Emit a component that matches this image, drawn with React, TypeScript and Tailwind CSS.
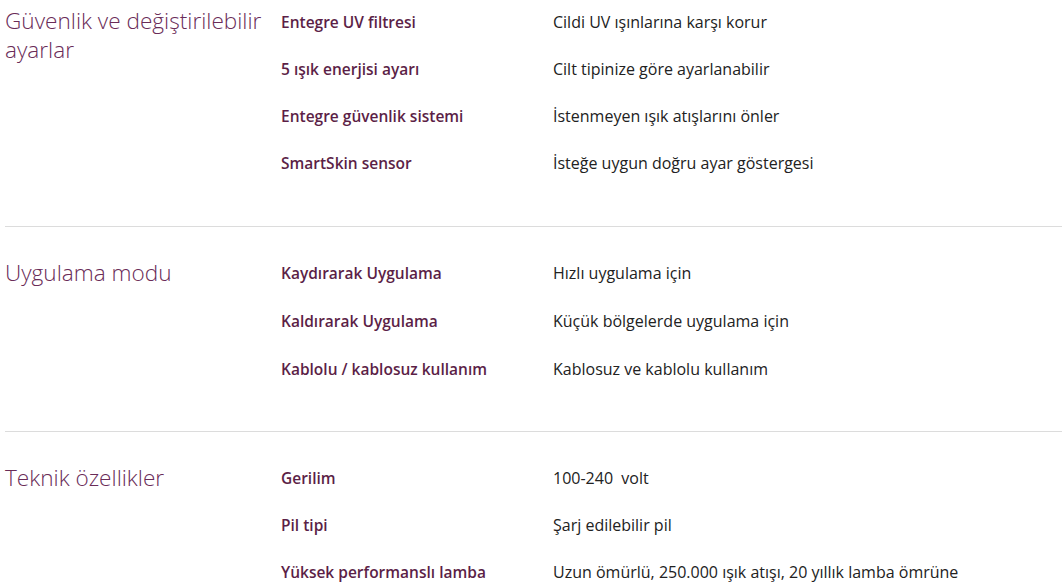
const SECTIONS: { title: string; rows: [string, string][] }[] = [
  {
    title: 'Güvenlik ve değiştirilebilir ayarlar',
    rows: [
      ['Entegre UV filtresi', 'Cildi UV ışınlarına karşı korur'],
      ['5 ışık enerjisi ayarı', 'Cilt tipinize göre ayarlanabilir'],
      ['Entegre güvenlik sistemi', 'İstenmeyen ışık atışlarını önler'],
      ['SmartSkin sensor', 'İsteğe uygun doğru ayar göstergesi'],
    ],
  },
  {
    title: 'Uygulama modu',
    rows: [
      ['Kaydırarak Uygulama', 'Hızlı uygulama için'],
      ['Kaldırarak Uygulama', 'Küçük bölgelerde uygulama için'],
      ['Kablolu / kablosuz kullanım', 'Kablosuz ve kablolu kullanım'],
    ],
  },
  {
    title: 'Teknik özellikler',
    rows: [
      ['Gerilim', '100-240\u00a0 volt'],
      ['Pil tipi', 'Şarj edilebilir pil'],
      ['Yüksek performanslı lamba', 'Uzun ömürlü, 250.000 ışık atışı, 20 yıllık lamba ömrüne'],
    ],
  },
];

export default function App() {
  return (
    <div
      className="w-[1062px] h-[585px] overflow-hidden bg-white pl-[5px]"
      style={{ fontFamily: '"Open Sans", "Noto Sans", sans-serif' }}
    >
      {SECTIONS.map((s, i) => (
        <section
          key={s.title}
          className={
            i === 0
              ? 'grid grid-cols-[276px_272px_1fr] pb-[51px] border-b border-[#dcdcdc]'
              : i === SECTIONS.length - 1
                ? 'grid grid-cols-[276px_272px_1fr] pt-[34px] pb-[50px]'
                : 'grid grid-cols-[276px_272px_1fr] pt-[34px] pb-[50px] border-b border-[#dcdcdc]'
          }
        >
          <h3
            className={
              i === 0
                ? 'pt-[6px] pr-2 text-[22.6px] leading-[29px] font-light text-[#6a2c58]'
                : '-mt-[3px] pr-2 text-[22.6px] leading-[29px] font-light text-[#6a2c58]'
            }
          >
            {s.title}
          </h3>
          <div
            className={
              i === 0
                ? 'col-span-2 flex flex-col gap-[23px] pt-[10px]'
                : i === 1
                  ? 'col-span-2 flex flex-col gap-[24px]'
                  : 'col-span-2 flex flex-col gap-[23px]'
            }
          >
            {s.rows.map(([label, value]) => (
              <div key={label} className="grid grid-cols-[272px_1fr] leading-[24px]">
                <span className="text-[15.5px] font-semibold text-[#5c1f47]">{label}</span>
                <span className="text-[16px] text-[#222222]">{value}</span>
              </div>
            ))}
          </div>
        </section>
      ))}
    </div>
  );
}
